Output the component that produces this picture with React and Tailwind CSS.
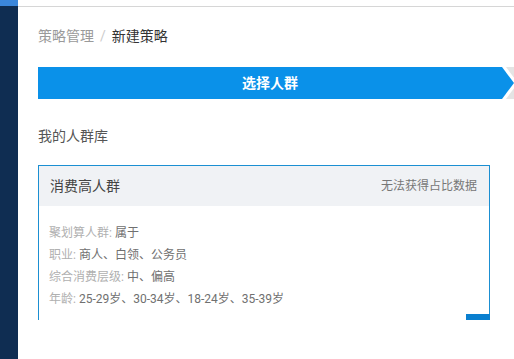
const font = { fontFamily: 'Roboto, "Noto Sans CJK SC", sans-serif' };

const rows = [
  ['聚划算人群', '属于'],
  ['职业', '商人、白领、公务员'],
  ['综合消费层级', '中、偏高'],
  ['年龄', '25-29岁、30-34岁、18-24岁、35-39岁'],
];

export default function App() {
  return (
    <div className="flex h-[359px] w-[514px] overflow-hidden bg-white" style={font}>
      {/* Sidebar */}
      <div className="flex w-[18px] shrink-0 flex-col bg-[#0f2d52]">
        <div className="h-[6px] bg-[#3b87dc]" />
      </div>

      {/* Main */}
      <div className="flex min-w-0 flex-1 flex-col">
        <div className="h-[7px] border-b border-[#d6d6d6]" />

        <div className="pl-[20px]">
          {/* Breadcrumb */}
          <div className="mt-[19px] flex h-[20px] items-center text-[14px] leading-[20px]">
            <span className="text-[#9a9a9a]">策略管理</span>
            <span className="mx-[6px] text-[#cccccc]">/</span>
            <span className="text-[#333333]">新建策略</span>
          </div>

          {/* Step bar */}
          <div className="mt-[21px] flex h-[32px]">
            <div className="flex flex-1 items-center justify-center bg-[#0a91e9] text-[14px] font-bold text-white">
              选择人群
            </div>
            <svg width="12" height="32" viewBox="0 0 12 32" className="shrink-0">
              <polygon points="0,0 12,16 0,32" fill="#0a91e9" />
              <polygon points="4,0 12,0 12,10.7" fill="#e4e4e4" />
              <polygon points="4,32 12,32 12,21.3" fill="#e4e4e4" />
            </svg>
          </div>

          {/* Section title */}
          <div className="mt-[27px] h-[20px] text-[14px] leading-[20px] text-[#555555]">我的人群库</div>

          {/* Card */}
          <div className="relative mt-[19px] w-[452px] border-x border-t border-[#1b8fd2]">
            <div className="flex h-[40px] items-center justify-between bg-[#f0f2f5] pl-[11px] pr-[12px]">
              <span className="text-[14px] text-[#444444]">消费高人群</span>
              <span className="text-[12px] text-[#777777]">无法获得占比数据</span>
            </div>
            <div className="pl-[10px] pt-[16px] pb-[10px] text-[12px] leading-[22px]">
              {rows.map(([label, value]) => (
                <div key={label}>
                  <span className="text-[#b0b0b0]">{label}: </span>
                  <span className="text-[#707070]">{value}</span>
                </div>
              ))}
            </div>
            <div className="absolute bottom-0 right-[-1px] h-[6px] w-[24px] bg-[#0a7fcf]" />
          </div>
        </div>
      </div>
    </div>
  );
}
